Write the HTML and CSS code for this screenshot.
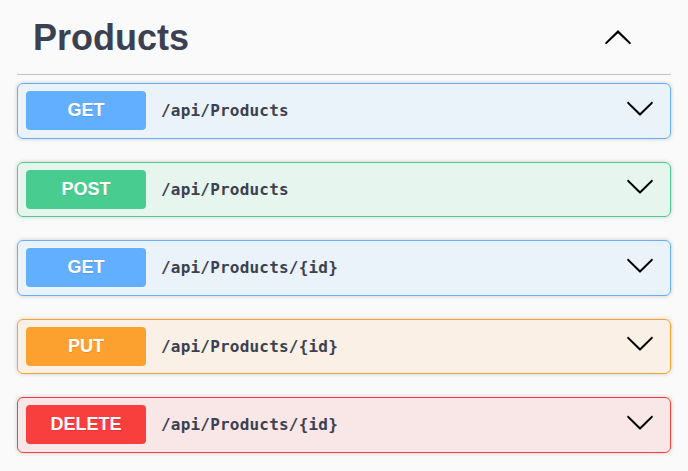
FILE: index.html
```html
<!DOCTYPE html>
<html lang="en">
<head>
<meta charset="UTF-8">
<meta name="viewport" content="width=device-width, initial-scale=1.0">
<title>Products API</title>
<link rel="stylesheet" href="styles.css">
</head>
<body>

<div class="tag-section">
  <div class="tag-header">
    <h3 class="tag-title">Products</h3>
    <svg class="arrow arrow-up" width="30" height="30" viewBox="0 0 20 20" aria-hidden="true">
      <path d="M17.418 6.109c.272-.268.709-.268.979 0s.271.701 0 .969l-7.908 7.83c-.27.268-.707.268-.979 0l-7.908-7.83c-.27-.268-.27-.701 0-.969.271-.268.709-.268.979 0L10 13.25l7.418-7.141z"/>
    </svg>
  </div>

  <div class="opblock opblock-get">
    <span class="method">GET</span>
    <span class="path">/api/Products</span>
    <svg class="arrow" width="30" height="30" viewBox="0 0 20 20" aria-hidden="true">
      <path d="M17.418 6.109c.272-.268.709-.268.979 0s.271.701 0 .969l-7.908 7.83c-.27.268-.707.268-.979 0l-7.908-7.83c-.27-.268-.27-.701 0-.969.271-.268.709-.268.979 0L10 13.25l7.418-7.141z"/>
    </svg>
  </div>

  <div class="opblock opblock-post">
    <span class="method">POST</span>
    <span class="path">/api/Products</span>
    <svg class="arrow" width="30" height="30" viewBox="0 0 20 20" aria-hidden="true">
      <path d="M17.418 6.109c.272-.268.709-.268.979 0s.271.701 0 .969l-7.908 7.83c-.27.268-.707.268-.979 0l-7.908-7.83c-.27-.268-.27-.701 0-.969.271-.268.709-.268.979 0L10 13.25l7.418-7.141z"/>
    </svg>
  </div>

  <div class="opblock opblock-get">
    <span class="method">GET</span>
    <span class="path">/api/Products/{id}</span>
    <svg class="arrow" width="30" height="30" viewBox="0 0 20 20" aria-hidden="true">
      <path d="M17.418 6.109c.272-.268.709-.268.979 0s.271.701 0 .969l-7.908 7.83c-.27.268-.707.268-.979 0l-7.908-7.83c-.27-.268-.27-.701 0-.969.271-.268.709-.268.979 0L10 13.25l7.418-7.141z"/>
    </svg>
  </div>

  <div class="opblock opblock-put">
    <span class="method">PUT</span>
    <span class="path">/api/Products/{id}</span>
    <svg class="arrow" width="30" height="30" viewBox="0 0 20 20" aria-hidden="true">
      <path d="M17.418 6.109c.272-.268.709-.268.979 0s.271.701 0 .969l-7.908 7.83c-.27.268-.707.268-.979 0l-7.908-7.83c-.27-.268-.27-.701 0-.969.271-.268.709-.268.979 0L10 13.25l7.418-7.141z"/>
    </svg>
  </div>

  <div class="opblock opblock-delete">
    <span class="method">DELETE</span>
    <span class="path">/api/Products/{id}</span>
    <svg class="arrow" width="30" height="30" viewBox="0 0 20 20" aria-hidden="true">
      <path d="M17.418 6.109c.272-.268.709-.268.979 0s.271.701 0 .969l-7.908 7.83c-.27.268-.707.268-.979 0l-7.908-7.83c-.27-.268-.27-.701 0-.969.271-.268.709-.268.979 0L10 13.25l7.418-7.141z"/>
    </svg>
  </div>
</div>

</body>
</html>
```

FILE: styles.css
```css
body {
  margin: 0;
  background-color: #fafafa;
  font-family: "Liberation Sans", Arial, sans-serif;
  color: #3b4151;
}
.tag-section {
  padding: 0 17px;
}
.tag-header {
  display: flex;
  align-items: center;
  padding: 17px 38px 16px 16px;
  border-bottom: 1px solid rgba(59, 65, 81, 0.3);
  margin-bottom: 8px;
}
.tag-title {
  flex: 1;
  margin: 0;
  font-size: 36px;
  line-height: 41px;
  font-weight: bold;
}
.arrow {
  flex-shrink: 0;
  fill: #000;
}
.arrow-up {
  transform: rotate(180deg);
}
.opblock {
  display: flex;
  align-items: center;
  padding: 7px 8px 7.5px 8px;
  margin-bottom: 23px;
  border: 1px solid;
  border-radius: 6px;
  box-shadow: 0 0 4px rgba(0, 0, 0, 0.19);
}
.opblock .arrow {
  margin: 0 7px 6px 0;
}
.method {
  width: 120px;
  flex-shrink: 0;
  height: 39px;
  line-height: 39px;
  text-align: center;
  border-radius: 4px;
  color: #fff;
  font-size: 18px;
  font-weight: bold;
  text-shadow: 0 1px 0 rgba(0, 0, 0, 0.1);
}
.path {
  flex: 1;
  padding-left: 15px;
  font-family: "DejaVu Sans Mono", monospace;
  font-size: 16px;
  font-weight: bold;
  letter-spacing: 0.2px;
  color: #3b4151;
}
.opblock-get {
  background-color: rgba(97, 175, 254, 0.1);
  border-color: #61affe;
}
.opblock-get .method {
  background-color: #61affe;
}
.opblock-post {
  background-color: rgba(73, 204, 144, 0.1);
  border-color: #49cc90;
}
.opblock-post .method {
  background-color: #49cc90;
}
.opblock-put {
  background-color: rgba(252, 161, 48, 0.1);
  border-color: #fca130;
}
.opblock-put .method {
  background-color: #fca130;
}
.opblock-delete {
  background-color: rgba(249, 62, 62, 0.1);
  border-color: #f93e3e;
}
.opblock-delete .method {
  background-color: #f93e3e;
}
```
